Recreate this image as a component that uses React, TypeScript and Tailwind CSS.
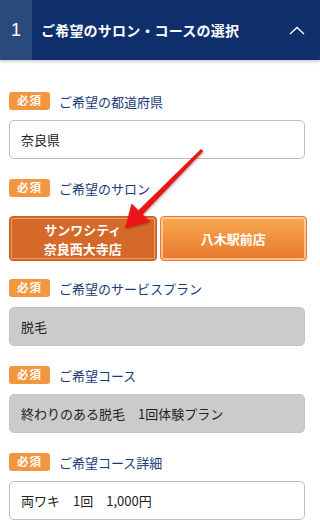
import React from "react";

const font = { fontFamily: '"Noto Sans CJK JP", "Noto Sans", sans-serif' };

function Badge(): JSX.Element {
  return (
    <span className="flex h-[18px] w-[41px] items-center justify-center rounded-[3px] bg-[#f29640] text-[11.5px] font-bold leading-none tracking-[1px] text-white">
      必須
    </span>
  );
}

function Label({ text }: { text: string }): JSX.Element {
  return (
    <div className="flex h-[18px] items-center gap-[9px]">
      <Badge />
      <span className="text-[13px] leading-none text-[#1b3a78]">{text}</span>
    </div>
  );
}

function Field({ value, disabled }: { value: string; disabled?: boolean }): JSX.Element {
  return (
    <div
      className={
        disabled
          ? "mt-[10px] flex h-[39px] w-[296px] items-center rounded-[5px] border border-[#c4c4c4] bg-[#cbcbcb] px-[11px] text-[13px] text-[#222]"
          : "mt-[10px] flex h-[39px] w-[296px] items-center rounded-[5px] border border-[#bdbdbd] bg-white px-[11px] text-[13px] text-[#222]"
      }
    >
      {value}
    </div>
  );
}

export default function App(): JSX.Element {
  return (
    <div className="relative h-[528px] w-[320px] overflow-hidden bg-white" style={font}>
      <div className="flex h-[60px] items-stretch bg-[#0e2f6b] shadow-[0_2px_3px_rgba(0,0,0,0.18)]">
        <div className="flex w-[32px] items-center justify-center bg-[#2a4a7e] font-['Liberation_Sans',sans-serif] text-[18px] text-white">
          1
        </div>
        <div className="flex flex-1 items-center pl-[9px] text-[14px] font-bold tracking-[0.2px] text-white">
          ご希望のサロン・コースの選択
        </div>
        <div className="flex w-[40px] items-center justify-center pr-[6px]">
          <svg width="16" height="9" viewBox="0 0 16 9" fill="none">
            <path d="M1 8 L8 1.5 L15 8" stroke="white" strokeWidth="1.3" />
          </svg>
        </div>
      </div>

      <div className="flex flex-col gap-[20px] px-[9px] pt-[32px]">
        <div>
          <Label text="ご希望の都道府県" />
          <Field value="奈良県" />
        </div>
        <div>
          <Label text="ご希望のサロン" />
          <div className="mt-[19px] flex w-[298px] gap-[3px]">
            <button
              type="button"
              className="flex h-[45px] flex-1 items-center justify-center rounded-[4px] border border-[#c9601f] bg-[#d4692a] text-[13px] font-bold leading-[19px] text-white shadow-[inset_0_0_0_1px_#d4692a,inset_0_0_0_2px_#eea06c]"
            >
              サンワシティ
              <br />
              奈良西大寺店
            </button>
            <button
              type="button"
              className="flex h-[45px] flex-1 items-center justify-center rounded-[4px] border border-[#e57a30] bg-gradient-to-b from-[#f7a84f] to-[#e9792f] text-[13px] font-bold text-white shadow-[inset_0_0_0_1px_rgba(0,0,0,0),inset_0_0_0_2px_rgba(255,220,180,0.7)]"
            >
              八木駅前店
            </button>
          </div>
        </div>
        <div className="-mt-[2px]">
          <Label text="ご希望のサービスプラン" />
          <Field value="脱毛" disabled />
        </div>
        <div>
          <Label text="ご希望コース" />
          <Field value="終わりのある脱毛　1回体験プラン" disabled />
        </div>
        <div>
          <Label text="ご希望コース詳細" />
          <Field value="両ワキ　1回　1,000円" />
        </div>
      </div>

      <svg className="pointer-events-none absolute left-0 top-0" width="320" height="528" viewBox="0 0 320 528">
        <defs>
          <filter id="sh" x="-20%" y="-20%" width="140%" height="140%">
            <feDropShadow dx="1" dy="1" stdDeviation="1.2" floodColor="#000" floodOpacity="0.3" />
          </filter>
        </defs>
        <polygon
          points="201,149 203.2,151.2 142.8,214.6 150,221.5 125,228.5 131.5,203.5 138.4,210.3"
          fill="#ec1313"
          filter="url(#sh)"
        />
      </svg>
    </div>
  );
}
